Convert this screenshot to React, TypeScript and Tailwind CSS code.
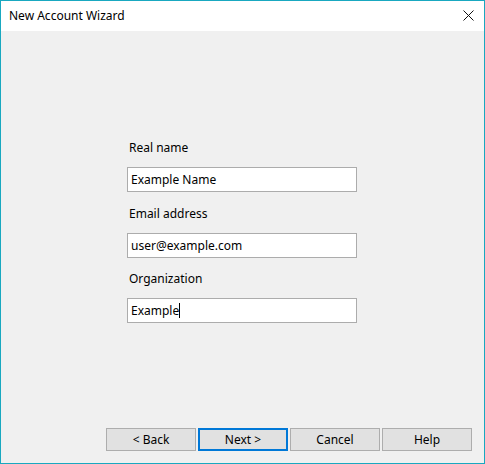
import React from "react";

const fields = [
  { label: "Real name", value: "Example Name", gap: "" },
  { label: "Email address", value: "user@example.com", gap: "mt-[14px]" },
  { label: "Organization", value: "Example", gap: "mt-[13px]", caret: true },
];

const buttons = ["< Back", "Next >", "Cancel", "Help"];

export default function App() {
  return (
    <div
      className="w-[485px] h-[464px] flex flex-col border border-[#19a8c0] bg-[#f0f0f0] text-[12px] text-black"
      style={{ fontFamily: '"Noto Sans", "Liberation Sans", sans-serif' }}
    >
      {/* title bar */}
      <div className="h-[30px] bg-white flex items-center justify-between pl-[8px] pr-[10px]">
        <span className="leading-none">New Account Wizard</span>
        <svg width="11" height="11" viewBox="0 0 11 11" className="mb-[1px]">
          <path d="M0.5 0.5 L10.5 10.5 M10.5 0.5 L0.5 10.5" stroke="#111" strokeWidth="1" />
        </svg>
      </div>

      {/* form */}
      <div className="flex-1 flex flex-col pl-[126px] pt-[109px]">
        <div className="w-[230px] flex flex-col">
          {fields.map((f) => (
            <div key={f.label} className={"flex flex-col " + f.gap}>
              <label className="h-[16px] leading-[16px] pl-[2px] mb-[11px]">{f.label}</label>
              <div className="h-[25px] bg-white border border-[#acacac] flex items-center pl-[3px]">
                <span className="leading-none">{f.value}</span>
                {f.caret && <span className="w-px h-[15px] bg-black" />}
              </div>
            </div>
          ))}
        </div>
      </div>

      {/* buttons */}
      <div className="flex justify-end gap-[2px] pr-[12px] pb-[12px]">
        {buttons.map((b, i) => (
          <button
            key={b}
            className={
              "w-[90px] h-[23px] bg-[#e1e1e1] flex items-center justify-center leading-none " +
              (i === 1 ? "border-2 border-[#0078d7]" : "border border-[#adadad]")
            }
          >
            {b}
          </button>
        ))}
      </div>
    </div>
  );
}
